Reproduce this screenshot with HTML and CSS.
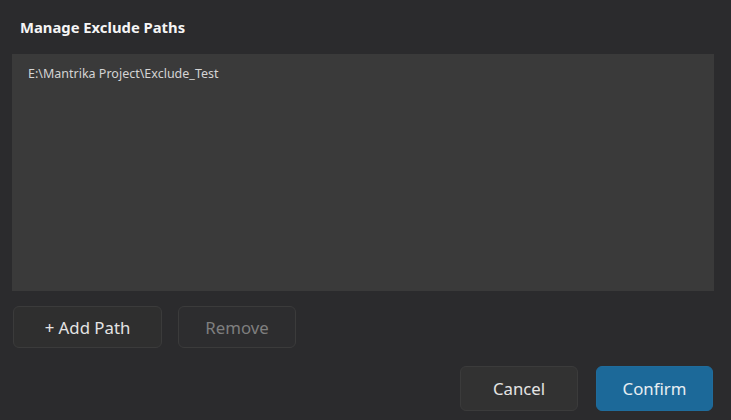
FILE: index.html
```html
<!DOCTYPE html>
<html lang="en">
<head>
  <meta charset="UTF-8">
  <title>Manage Exclude Paths</title>
  <link rel="stylesheet" href="styles.css">
</head>
<body>
  <div class="dialog">
    <div class="title">Manage Exclude Paths</div>
    <div class="path-list">
      <div class="path-item">E:\Mantrika Project\Exclude_Test</div>
    </div>
    <div class="tools">
      <button class="button add-button">+ Add Path</button>
      <button class="button remove-button" disabled>Remove</button>
    </div>
    <div class="actions">
      <button class="button cancel-button">Cancel</button>
      <button class="button confirm-button">Confirm</button>
    </div>
  </div>
</body>
</html>
```

FILE: styles.css
```css
/* General reset */
* {
  margin: 0;
  padding: 0;
  box-sizing: border-box;
}

body {
  background-color: #2b2b2d;
  font-family: "Noto Sans", "Open Sans", sans-serif;
  color: #e4e4e4;
  overflow: hidden;
}

/* Dialog layout */
.dialog {
  display: flex;
  flex-direction: column;
  padding: 17px 17px 0 12px;
}

.title {
  font-size: 14.8px;
  font-weight: bold;
  line-height: 20px;
  margin: 0 0 17px 8px;
  color: #f5f5f5;
}

/* Path list */
.path-list {
  height: 237px;
  background-color: #3a3a3a;
  padding: 11px 16px;
}

.path-item {
  font-size: 12.5px;
  line-height: 18px;
  color: #d4d4d4;
}

/* Buttons */
.tools {
  display: flex;
  gap: 16px;
  margin-top: 15px;
  padding-left: 1px;
}

.actions {
  display: flex;
  justify-content: flex-end;
  gap: 18px;
  margin-top: 18px;
  padding-right: 1px;
}

.button {
  font-family: inherit;
  font-size: 16.8px;
  height: 42px;
  width: 118px;
  border-radius: 6px;
  border: 1px solid #3b3b3b;
  background-color: #2f2f2f;
  color: #e4e4e4;
  cursor: pointer;
}

.add-button {
  width: 149px;
}

.remove-button {
  color: #7f7f7f;
  background-color: #2d2d2f;
  cursor: default;
}

.cancel-button,
.confirm-button {
  height: 45px;
}

.cancel-button {
  background-color: #323232;
}

.confirm-button {
  width: 117px;
  background-color: #1c6999;
  border-color: #1f6c9c;
  color: #e8eef2;
}
```
